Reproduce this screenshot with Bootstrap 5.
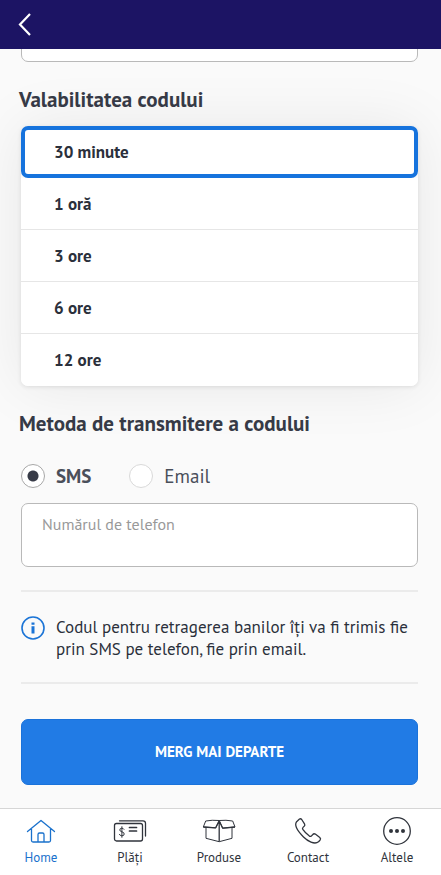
<!DOCTYPE html>
<html lang="ro">
<head>
<meta charset="utf-8">
<meta name="viewport" content="width=device-width, initial-scale=1">
<title>Retragere numerar</title>
<link rel="stylesheet" href="https://cdn.jsdelivr.net/npm/bootstrap@5.3.0/dist/css/bootstrap.min.css">
<style>
body { font-family: "PT Sans", Lato, "Noto Sans", sans-serif; font-size: 17px; line-height: 22px; color: #2b303b; background: #fafafa; }
.topbar { height: 49px; background: #1c1464; z-index: 2; padding: 0 16px; }
.back-btn { line-height: 0; }
.page-body { padding: 0 21px 0 19px; }
.inset-block { margin: 0 2px; }
.section-title { font-size: 21px; line-height: 26px; font-weight: 700; color: #363a46; margin: 25px 0 0; }
.field { height: 64px; border: 1px solid #b9b9b9; border-radius: 7px; background: #fff; font-size: 16px; padding: 0 20px 22px; }
.field::placeholder { color: #999; opacity: 1; }
.field-scrolled { margin-top: -51px; }
.phone-field { margin-top: 15px; }
.duration-list { border-radius: 7px; box-shadow: 0 1px 4px rgba(0,0,0,.1), 0 0 60px rgba(0,0,0,.08); margin-top: 13px; }
.duration-list .list-group-item { height: 52px; padding: 0 33px; border: 0; border-bottom: 1px solid #e6e6e6; font-size: 17px; font-weight: 700; color: #2b303b; }
.duration-list .list-group-item:last-child { border-bottom: 0; }
.duration-list .list-group-item.active { background: #fff; border: 4px solid #1673dd; border-radius: 7px; padding: 0 29px; margin: 0; }
.method { font-size: 19px; gap: 11px; color: #4a4f5a; }
.method .form-check-input { width: 24px; height: 24px; margin: 0; background-color: #fff; border: 1px solid #d9d9d9; }
.method .form-check-input:checked { border-color: #a8a8a8; background-image: radial-gradient(circle, #373b47 5px, transparent 6px); }
.method-row { gap: 38px; margin-top: 27px; }
.note { border-top: 2px solid #ebebeb; border-bottom: 2px solid #ebebeb; padding: 24px 0 22px; gap: 11px; margin-top: 23px; }
.note-text { padding-right: 4px; }
.submit-btn { height: 66px; margin-top: 35px; background: #217be5; border: 1px solid #1a72da; border-radius: 7px; color: #fff; font-size: 15px; font-weight: 700; }
.submit-btn:hover { background: #1a72da; color: #fff; }
.tabs { height: 67px; background: #fff; border-top: 1px solid #d6d6d6; padding: 4px 8px 0 5px; }
.tab-link { width: 72px; font-size: 13px; line-height: 18px; color: #30343c; }
.tab-link.current { color: #1a71cc; }
.tab-link svg { width: 36px; height: 36px; }
</style>
<script src="https://cdn.jsdelivr.net/npm/bootstrap@5.3.0/dist/js/bootstrap.bundle.min.js"></script>
</head>
<body>
<div class="d-flex flex-column min-vh-100">
  <header class="topbar d-flex align-items-center position-relative">
    <button type="button" class="back-btn btn p-0 border-0" aria-label="Înapoi">
      <svg width="18" height="26" viewBox="0 0 18 26" fill="none" stroke="#fff" stroke-width="2.2"><path d="M14 2 4 12.500l10 10.500"/></svg>
    </button>
  </header>
  <main class="page-body flex-grow-1">
    <div class="inset-block">
      <input type="text" class="field field-scrolled form-control" aria-label="Suma">
    </div>
    <h2 class="section-title" id="validity">Valabilitatea codului</h2>
    <div class="duration-list list-group inset-block" role="group" aria-labelledby="validity">
      <button type="button" class="list-group-item list-group-item-action active" aria-pressed="true">30 minute</button>
      <button type="button" class="list-group-item list-group-item-action">1 oră</button>
      <button type="button" class="list-group-item list-group-item-action">3 ore</button>
      <button type="button" class="list-group-item list-group-item-action">6 ore</button>
      <button type="button" class="list-group-item list-group-item-action">12 ore</button>
    </div>
    <h2 class="section-title" id="method">Metoda de transmitere a codului</h2>
    <div class="inset-block">
      <div class="method-row d-flex" role="radiogroup" aria-labelledby="method">
        <div class="method d-flex align-items-center">
          <input class="form-check-input" type="radio" name="via" id="via-sms" checked>
          <label for="via-sms" class="fw-bold">SMS</label>
        </div>
        <div class="method d-flex align-items-center">
          <input class="form-check-input" type="radio" name="via" id="via-email">
          <label for="via-email">Email</label>
        </div>
      </div>
      <input type="tel" class="phone-field field form-control" placeholder="Numărul de telefon" aria-label="Numărul de telefon">
      <div class="note d-flex align-items-start">
        <svg class="flex-shrink-0" width="24" height="24" viewBox="0 0 24 24"><circle cx="12" cy="12" r="11" fill="none" stroke="#1b74d6" stroke-width="1.600"/><path d="M10.500 6.500h3v2.300h-3zM10.500 10.300h3v7.200h-3z" fill="#1b74d6"/></svg>
        <p class="note-text mb-0">Codul pentru retragerea banilor îți va fi trimis fie prin SMS pe telefon, fie prin email.</p>
      </div>
      <button type="button" class="submit-btn btn w-100">MERG MAI DEPARTE</button>
    </div>
  </main>
  <nav class="tabs d-flex justify-content-between">
    <a href="#" class="tab-link current d-flex flex-column align-items-center text-decoration-none" aria-current="page">
      <svg viewBox="0 0 36 36" fill="none" stroke="currentColor" stroke-width="1.300" stroke-linecap="round" stroke-linejoin="round"><path d="M4.500 18.500 18 7.500l13.500 11M8.500 16v11.500q0 1.500 1.500 1.500h16q1.500 0 1.500-1.500V16M15 29v-7.500q0-1.500 1.500-1.500h3q1.500 0 1.500 1.500V29"/></svg>
      Home
    </a>
    <a href="#" class="tab-link d-flex flex-column align-items-center text-decoration-none">
      <svg viewBox="0 0 36 36" fill="none" stroke="currentColor" stroke-width="1.300" stroke-linecap="round"><rect x="2.500" y="10.500" width="28" height="17.500" rx="2"/><path d="M7.500 7.800H31q2.500 0 2.500 2.500V23"/><path d="M12 16.300q-.6-1.100-2.200-1.100-2 0-2 1.800 0 1.300 2.100 1.800 2.300.5 2.300 2.200 0 1.800-2.300 1.800-2 0-2.500-1.400M9.900 13.700v10.600" stroke-width="1"/><path d="M17.500 14.500h7M17.500 18h7" stroke-width="1.700"/></svg>
      Plăți
    </a>
    <a href="#" class="tab-link d-flex flex-column align-items-center text-decoration-none">
      <svg viewBox="0 0 36 36" fill="none" stroke="currentColor" stroke-width="1" stroke-linejoin="round"><path d="M5 14v11.300l13.200 3.400L31 25.300V14M4.700 8Q11 6.800 18.200 7.500 25 6.800 31.700 8L34 14l-12.300 1.200-3.500-7.400-3.500 7L2.300 14z"/><path d="M2.300 14l12.400.8 3.500-7 3.500 7.400L34 14M18.200 8v20.500" stroke-width="1.300"/></svg>
      Produse
    </a>
    <a href="#" class="tab-link d-flex flex-column align-items-center text-decoration-none">
      <svg viewBox="0 0 36 36" fill="none" stroke="currentColor" stroke-width="1.300" stroke-linejoin="round"><path d="M9.500 6 6.600 8.700C3.500 13 9.500 20 13.500 24s11 8 15 4.800l1.500-1.600q1.200-1.400-.2-2.700l-4.500-3.400q-1.400-.9-2.500.4l-1.500 1.600q-.8.700-1.900 0Q15 19.700 12.800 16.400q-.7-1.200.2-2l1.300-1.300q1-1 .2-2.300L11.700 6.500q-1-1.200-2.200-.5z"/></svg>
      Contact
    </a>
    <a href="#" class="tab-link d-flex flex-column align-items-center text-decoration-none">
      <svg viewBox="0 0 36 36" fill="none" stroke="currentColor" stroke-width="1.300"><circle cx="18" cy="18" r="13.300"/><g fill="currentColor" stroke="none"><circle cx="12" cy="18" r="2"/><circle cx="18" cy="18" r="2"/><circle cx="24" cy="18" r="2"/></g></svg>
      Altele
    </a>
  </nav>
</div>
</body>
</html>
